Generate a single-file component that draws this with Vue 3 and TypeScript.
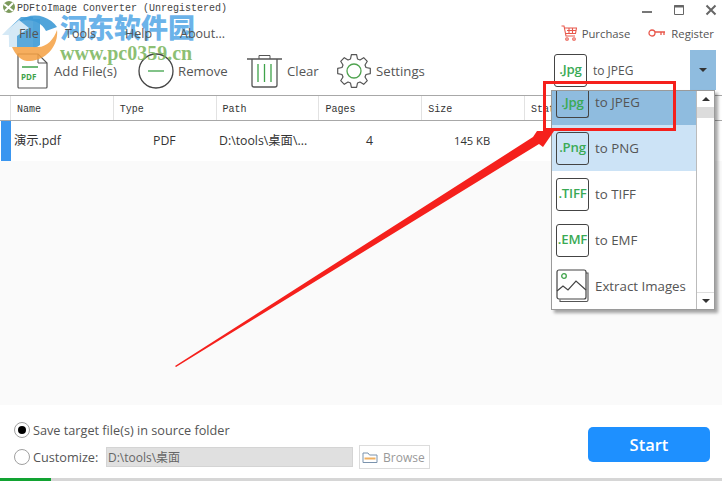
<script setup lang="ts">
interface Col { label: string; width: number }
const cols: Col[] = [
  { label: 'Name', width: 102.8 },
  { label: 'Type', width: 102.8 },
  { label: 'Path', width: 102.8 },
  { label: 'Pages', width: 102.8 },
  { label: 'Size', width: 102.8 },
  { label: 'Status', width: 190 },
]
const menus = ['File', 'Tools', 'Help', 'About...']
const options = [
  { tag: '.Png', label: 'to PNG', cls: 'sel' },
  { tag: '.TIFF', label: 'to TIFF', cls: '' },
  { tag: '.EMF', label: 'to EMF', cls: '' },
]

function gearPath(cx: number, cy: number, outer: number, inner: number, teeth: number): string {
  const pts: string[] = []
  const step = (Math.PI * 2) / teeth
  for (let i = 0; i < teeth; i++) {
    const a = i * step - Math.PI / 2
    const seq: [number, number][] = [
      [inner, a - step * 0.36],
      [outer, a - step * 0.2],
      [outer, a + step * 0.2],
      [inner, a + step * 0.36],
    ]
    for (const [r, t] of seq) {
      pts.push(`${(cx + r * Math.cos(t)).toFixed(1)} ${(cy + r * Math.sin(t)).toFixed(1)}`)
    }
  }
  return 'M' + pts.join('L') + 'Z'
}
const gear = gearPath(17, 17, 16.5, 12.5, 8)
</script>

<template>
  <div class="app">
    <div class="titlebar">
      <svg class="appicon" width="14" height="14" viewBox="0 0 14 14"><circle cx="7" cy="6" r="6" fill="#7c9a5c"/><path d="M2 3l9 7M3 10l8-8" stroke="#fff" stroke-width="2"/></svg>
      <span class="title">PDFtoImage Converter (Unregistered)</span>
      <div class="winbtns">
        <svg width="14" height="14" viewBox="0 0 14 14"><path d="M2 9h10" stroke="#777" stroke-width="2"/></svg>
        <svg width="14" height="14" viewBox="0 0 14 14"><path d="M2.500 2.500h9v9h-9z" fill="none" stroke="#666"/><path d="M2 3.500h10" stroke="#666" stroke-width="2"/></svg>
        <svg width="14" height="14" viewBox="0 0 14 14"><path d="M2.500 2.500l9 9M11.500 2.500l-9 9" stroke="#666" stroke-width="2"/></svg>
      </div>
    </div>

    <div class="menubar">
      <div class="menus">
        <span v-for="m in menus" :key="m">{{ m }}</span>
      </div>
      <div class="links">
        <span class="link">
          <svg width="16" height="16" viewBox="0 0 16 16" fill="none" stroke="#e8574b" stroke-width="1.100"><path d="M0.500 1h2.500l2 10h9"/><path d="M3.500 3H15.500l-1 5.500H4.500M6 5.500h9M8 3v5.500M11.500 3v5.500"/><circle cx="6" cy="14" r="1.300"/><circle cx="13" cy="14" r="1.300"/></svg>
          Purchase
        </span>
        <span class="link">
          <svg width="18" height="10" viewBox="0 0 18 10" fill="none" stroke="#e8574b" stroke-width="1.300"><circle cx="4" cy="5" r="3"/><path d="M7 4h10M13 4v3M16 4v3"/></svg>
          Register
        </span>
      </div>
    </div>

    <div class="toolbar">
      <button class="tool t-add">
        <svg width="31" height="36" viewBox="0 0 31 36" fill="none"><path d="M1 1h20l9 9v24a1 1 0 0 1-1 1H2a1 1 0 0 1-1-1z" stroke="#555" stroke-width="1.200"/><path d="M21 1v9h9" stroke="#555"/><path d="M5 14h16" stroke="#3fa34a" stroke-width="1.500"/><text x="4" y="27" class="pdf">PDF</text></svg>
        <span>Add File(s)</span>
      </button>
      <button class="tool t-remove">
        <svg width="36" height="36" viewBox="0 0 36 36" fill="none"><circle cx="18" cy="18" r="17" stroke="#444" stroke-width="1.300"/><path d="M10 18h16" stroke="#3fa34a" stroke-width="1.300"/></svg>
        <span>Remove</span>
      </button>
      <button class="tool t-clear">
        <svg width="35" height="34" viewBox="0 0 35 34" fill="none"><path d="M0 5h35" stroke="#555" stroke-width="1.300"/><path d="M12 5V1.500h11V5" stroke="#555"/><path d="M5 5v26a2 2 0 0 0 2 2h21a2 2 0 0 0 2-2V5" stroke="#555" stroke-width="1.300"/><path d="M11 10v18M17.500 10v18M24 10v18" stroke="#3fa34a" stroke-width="1.300"/></svg>
        <span>Clear</span>
      </button>
      <button class="tool t-settings">
        <svg width="34" height="34" viewBox="0 0 34 34" fill="none"><path :d="gear" stroke="#555" stroke-width="1.200" stroke-linejoin="round"/><circle cx="17" cy="17" r="7" stroke="#4fa34f" stroke-width="1.300"/></svg>
        <span>Settings</span>
      </button>
      <div class="combo">
        <span class="tagbox"><i>.Jpg</i></span>
        <span class="combo-label">to JPEG</span>
        <span class="combo-btn"><b class="down"></b></span>
      </div>
    </div>

    <div class="table">
      <div class="thead">
        <div class="gutter"></div>
        <div v-for="c in cols" :key="c.label" class="th" :style="{ width: c.width + 'px' }">{{ c.label }}</div>
      </div>
      <div class="row">
        <div class="marker"></div>
        <div class="td name">演示.pdf</div>
        <div class="td type">PDF</div>
        <div class="td path">D:\tools\桌面\...</div>
        <div class="td pages">4</div>
        <div class="td size">145 KB</div>
      </div>
      <div class="empty"></div>
    </div>

    <div class="bottom">
      <div class="options">
        <label class="opt"><span class="radio on"></span>Save target file(s) in source folder</label>
        <div class="opt second">
          <span class="radio"></span><span class="cust">Customize:</span>
          <span class="pathbox">D:\tools\桌面</span>
          <span class="browse">
            <svg width="16" height="13" viewBox="0 0 16 13" fill="none"><path d="M1 11V2h5l1.500 2H15v7.500H1z" stroke="#7b93ad"/><path d="M2.500 7.500h11" stroke="#f0b060" stroke-width="2"/></svg>
            Browse
          </span>
        </div>
      </div>
      <button class="start">Start</button>
    </div>
    <div class="progress"><div class="fill" :style="{ width: '51px' }"></div></div>

    <div class="dropdown">
      <div class="list">
        <div class="item hot">
          <span class="tagbox"><i>.Jpg</i></span><span class="hot-label">to JPEG</span>
        </div>
        <div v-for="o in options" :key="o.tag" class="item" :class="o.cls">
          <span class="tagbox"><i>{{ o.tag }}</i></span><span>{{ o.label }}</span>
        </div>
        <div class="item">
          <svg class="imgicon" width="33" height="34" viewBox="0 0 33 34" fill="none"><path d="M30 4h2v27a1.500 1.500 0 0 1-1.500 1.500H4v-2" stroke="#555" stroke-width="1.100"/><rect x="1" y="1" width="29" height="29" rx="2" stroke="#444" stroke-width="1.200"/><circle cx="8" cy="7" r="2.300" stroke="#3fa34a" stroke-width="1.300"/><path d="M1 22l6-5 5 4 8-9 10 9" stroke="#444" stroke-width="1.200"/></svg>
          <span>Extract Images</span>
        </div>
      </div>
      <div class="scroll">
        <span class="sbtn"><b class="up"></b></span>
        <span class="thumb"></span>
        <span class="track"></span>
        <span class="sbtn last"><b class="down"></b></span>
      </div>
    </div>

    <svg class="annot" width="722" height="481" viewBox="0 0 722 481">
      <rect x="544.500" y="82.500" width="130" height="47" fill="none" stroke="#f5201c" stroke-width="3"/>
      <path d="M175 366L533 137 537 131 554 131 543 147 539 144 176 367z" fill="#f5201c"/>
    </svg>

    <div class="watermark">
      <svg class="wm-logo" width="58" height="52" viewBox="0 0 58 52">
        <path d="M8 34A27 27 0 0 1 57 18L46 22C40 10 24 8 14 16 10 20 8 26 8 34z" fill="#3d9ad6" opacity=".9"/>
        <path d="M2 26L21 8h12v30H9V26z" fill="#3d9ad6" opacity=".85"/>
        <path d="M0 27L19 11l10 8-12 8v12H7V27z" fill="#fff" opacity=".75"/>
        <path d="M33 10h7v26a8 8 0 0 1-7 2z" fill="#3d9ad6" opacity=".9"/>
        <path d="M12 38h26c9 0 16-8 19-17 2 16-12 32-30 31-7-1-12-7-15-14z" fill="#f5a042" opacity=".85"/>
      </svg>
      <div class="wm-text">
        <div class="wm-cn">河东软件园</div>
        <div class="wm-url">www.pc0359.cn</div>
      </div>
    </div>
  </div>
</template>

<style>
html, body { margin: 0; background: #fff; }
</style>

<style scoped>
.app {
  position: relative;
  width: 722px;
  height: 481px;
  overflow: hidden;
  display: flex;
  flex-direction: column;
  background: #fff;
  font-family: "Open Sans", "Noto Sans CJK SC", sans-serif;
  font-size: 12px;
  color: #555;
}
.titlebar {
  height: 20px;
  display: flex;
  align-items: center;
  padding-left: 2px;
  flex: none;
}
.appicon { margin-right: 1px; margin-top: -4px; }
.title { font-family: "Liberation Mono", monospace; font-size: 10px; color: #444; margin-top: -3px; position: relative; z-index: 2; }
.winbtns { margin-left: auto; display: flex; gap: 18px; padding-right: 4px; }
.menubar {
  height: 26px;
  flex: none;
  display: flex;
  align-items: center;
  justify-content: space-between;
  padding: 0 8px 0 19px;
}
.menus {
  display: grid;
  grid-template-columns: 46px 60px 55px auto;
  font-size: 12.500px;
  color: #555;
  position: relative;
  z-index: 2;
}
.links { display: flex; gap: 18px; font-size: 11.300px; }
.link { display: flex; align-items: center; gap: 5px; }
.toolbar {
  position: relative;
  height: 49px;
  flex: none;
  display: flex;
  align-items: center;
  padding-left: 17px;
}
.tool {
  display: flex;
  align-items: center;
  padding: 0;
  border: 0;
  background: none;
  font: inherit;
  font-size: 13.200px;
  color: #555;
  flex: none;
}
.t-add { width: 121px; gap: 6px; }
.t-remove { width: 109px; gap: 4px; }
.t-clear { width: 90px; gap: 5px; }
.t-settings { gap: 5px; }
.pdf { font: bold 8px "Open Sans", sans-serif; fill: #3fa34a; }
.combo {
  margin-left: auto;
  width: 162px;
  height: 40px;
  align-self: flex-start;
  margin-top: 4px;
  margin-right: 6px;
  display: flex;
  align-items: center;
  font-size: 12px;
}
.combo-label { margin-left: 6px; }
.combo-btn {
  margin-left: auto;
  width: 26px;
  height: 100%;
  background: #8fbcdf;
  display: flex;
  align-items: center;
  justify-content: center;
}
.down, .up { display: block; width: 0; height: 0; border-left: 4px solid transparent; border-right: 4px solid transparent; }
.down { border-top: 4px solid #333; }
.up { border-bottom: 4px solid #333; }
.tagbox {
  width: 33px;
  height: 33px;
  flex: none;
  box-sizing: border-box;
  border: 1px solid #444;
  border-radius: 3px;
  display: flex;
  align-items: center;
  justify-content: center;
  overflow: hidden;
}
.tagbox i {
  font-style: normal;
  font-weight: 600;
  font-size: 13.200px;
  letter-spacing: -0.2px;
  color: #3aaa55;
  margin-top: -3px;
}
.table { flex: 1; display: flex; flex-direction: column; min-height: 0; }
.thead {
  height: 24px;
  flex: none;
  display: flex;
  border-top: 1px solid #a8a8a8;
  border-bottom: 1px solid #a8a8a8;
  font-family: "Liberation Mono", monospace;
  font-size: 10px;
  color: #333;
}
.gutter { width: 10px; flex: none; border-right: 1px solid #e2e2e2; }
.th {
  flex: none;
  box-sizing: border-box;
  padding-left: 6px;
  padding-top: 3px;
  line-height: 21px;
  border-right: 1px solid #e2e2e2;
  white-space: nowrap;
}
.row { height: 40px; flex: none; display: flex; align-items: center; color: #333; font-size: 12.300px; position: relative; }
.marker { width: 10px; margin-left: 1px; height: 100%; background: #3a96f0; flex: none; }
.td { flex: none; white-space: nowrap; margin-top: -2px; }
.name { width: 142px; padding-left: 3px; box-sizing: border-box; }
.type { width: 66px; }
.path { width: 129px; }
.pages { width: 106px; padding-left: 18px; box-sizing: border-box; }
.size { font-size: 11.200px; }
.empty { flex: 1; background: #fafafa; }
.bottom {
  height: 73px;
  flex: none;
  box-sizing: border-box;
  display: flex;
  justify-content: space-between;
  align-items: flex-start;
  padding: 17px 12px 0 14px;
}
.options { display: flex; flex-direction: column; gap: 7px; }
.opt { display: flex; align-items: center; color: #555; line-height: 16px; font-size: 12.700px; }
.radio {
  width: 14px;
  height: 14px;
  flex: none;
  margin-right: 3px;
  border: 1px solid #a0a0a0;
  border-radius: 50%;
  background: #fff;
  position: relative;
}
.radio.on::after {
  content: "";
  position: absolute;
  inset: 3px;
  border-radius: 50%;
  background: #000;
}
.cust { width: 73px; }
.pathbox {
  width: 247px;
  height: 20px;
  box-sizing: border-box;
  background: #e0e0e0;
  border: 1px solid #d4d4d4;
  color: #666;
  padding-left: 1px;
  line-height: 19px;
  font-size: 12px;
}
.browse {
  margin-left: 6px;
  width: 71px;
  height: 24px;
  box-sizing: border-box;
  border: 1px solid #dcdcdc;
  display: flex;
  align-items: center;
  gap: 5px;
  padding-left: 2px;
  padding-top: 1px;
  color: #999;
  font-size: 12px;
}
.start {
  width: 122px;
  height: 35px;
  margin-top: 5px;
  border: 0;
  border-radius: 5px;
  background: #1e90ff;
  color: #fff;
  font: 600 16.500px "Open Sans", sans-serif;
}
.progress { height: 3px; flex: none; background: #d6d6d6; }
.fill { height: 100%; background: #12a332; }
.dropdown {
  position: absolute;
  left: 551px;
  top: 90px;
  width: 164px;
  height: 220px;
  box-sizing: border-box;
  display: flex;
  background: #fff;
  border: 1px solid #9a9a9a;
  box-shadow: 3px 3px 3px rgba(0,0,0,.35);
  font-size: 13.300px;
  color: #555;
}
.list { flex: 1; overflow: hidden; }
.item {
  height: 46px;
  display: flex;
  align-items: center;
  gap: 6px;
  padding-left: 4px;
}
.item.hot { height: 34px; background: #8fbcdf; align-items: flex-start; }
.item.hot .tagbox { height: 27px; border-top: 0; border-radius: 0 0 3px 3px; }
.item.hot .tagbox i { margin-top: -5px; }
.hot-label { line-height: 22px; }
.item.sel { background: #cce3f6; }
.imgicon { flex: none; }
.scroll { width: 17px; flex: none; display: flex; flex-direction: column; border-left: 1px solid #bbb; }
.sbtn { height: 16px; flex: none; display: flex; align-items: center; justify-content: center; background: #fff; }
.sbtn.last { border-top: 1px solid #ddd; }
.thumb { height: 11px; background: #dcdcdc; }
.track { flex: 1; background: #fff; }
.annot { position: absolute; left: 0; top: 0; pointer-events: none; }
.watermark {
  position: absolute;
  left: 0;
  top: 9px;
  display: flex;
  gap: 2px;
  pointer-events: none;
  z-index: 1;
}
.wm-cn {
  font-family: "Noto Sans CJK SC", sans-serif;
  font-weight: 900;
  font-size: 27px;
  line-height: 33px;
  padding-top: 1px;
  color: rgba(50, 150, 225, .72);
  white-space: nowrap;
}
.wm-url {
  font-family: "Liberation Serif", serif;
  font-weight: 700;
  font-size: 20px;
  line-height: 20px;
  margin-top: 0;
  color: rgba(120, 180, 90, .85);
  white-space: nowrap;
}
</style>
